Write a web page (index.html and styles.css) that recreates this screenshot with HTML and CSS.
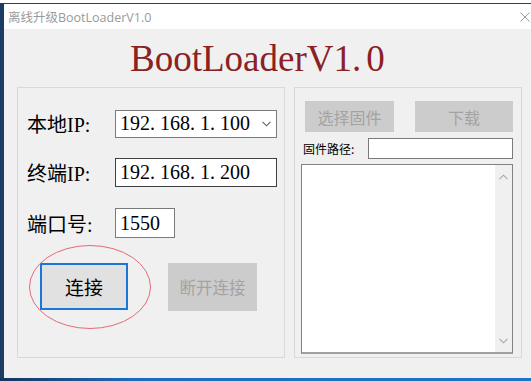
FILE: index.html
```html
<!DOCTYPE html>
<html lang="zh-CN">
<head>
    <meta charset="UTF-8">
    <title>离线升级BootLoaderV1.0</title>
    <link rel="stylesheet" href="styles.css">
</head>
<body>
    <div class="screen">
        <div class="window">
            <div class="titlebar">
                <span class="title">离线升级BootLoaderV1.0</span>
                <svg class="close" width="10" height="10" viewBox="0 0 10 10">
                    <path d="M0.5 0.5 L9.5 9.5 M9.5 0.5 L0.5 9.5" stroke="#9a9a9a" stroke-width="1" fill="none"/>
                </svg>
            </div>
            <div class="client">
                <h1 class="banner">BootLoaderV1.<span class="gap">0</span></h1>
                <div class="groups">
                    <div class="group group-net">
                        <div class="row row-local">
                            <span class="label">本地IP:</span>
                            <div class="field combo">
                                <span>192. 168. 1. 100</span>
                                <svg class="chevron" width="9" height="6" viewBox="0 0 9 6">
                                    <path d="M0.5 0.8 L4.5 4.8 L8.5 0.8" stroke="#606060" stroke-width="1.1" fill="none"/>
                                </svg>
                            </div>
                        </div>
                        <div class="row row-remote">
                            <span class="label">终端IP:</span>
                            <div class="field field-dark">192. 168. 1. 200</div>
                        </div>
                        <div class="row row-port">
                            <span class="label">端口号:</span>
                            <div class="field field-port">1550</div>
                        </div>
                        <div class="actions">
                            <button class="btn btn-connect">连接</button>
                            <button class="btn btn-off btn-disconnect" disabled>断开连接</button>
                        </div>
                        <svg class="mark" width="122" height="84" viewBox="0 0 122 84">
                            <ellipse cx="61" cy="42" rx="60.5" ry="41.5" stroke="#e26a78" stroke-width="1" fill="none"/>
                        </svg>
                    </div>
                    <div class="group group-fw">
                        <div class="fw-buttons">
                            <button class="btn btn-off btn-pick" disabled>选择固件</button>
                            <button class="btn btn-off btn-load" disabled>下载</button>
                        </div>
                        <div class="path-row">
                            <span class="path-label">固件路径:</span>
                            <div class="path-input"></div>
                        </div>
                        <div class="log">
                            <div class="log-text"></div>
                            <div class="scrollbar">
                                <svg width="9" height="6" viewBox="0 0 9 6">
                                    <path d="M0.5 5.2 L4.5 1.2 L8.5 5.2" stroke="#a6a6a6" stroke-width="1.1" fill="none"/>
                                </svg>
                                <svg width="9" height="6" viewBox="0 0 9 6">
                                    <path d="M0.5 0.8 L4.5 4.8 L8.5 0.8" stroke="#a6a6a6" stroke-width="1.1" fill="none"/>
                                </svg>
                            </div>
                        </div>
                    </div>
                </div>
            </div>
        </div>
        <div class="taskbar"></div>
    </div>
</body>
</html>
```

FILE: styles.css
```css
body {
    margin: 0;
    padding: 0;
    background: #ffffff;
    font-family: 'Liberation Serif', 'Noto Sans CJK SC', serif;
}
.screen {
    width: 531px;
    height: 381px;
    padding-top: 3px;
    box-sizing: border-box;
    display: flex;
    flex-direction: column;
    overflow: hidden;
}
.window {
    flex: 1;
    display: flex;
    flex-direction: column;
    border-top: 1px solid #3c3c3c;
    border-left: 4px solid #1c3d63;
}
.titlebar {
    height: 25px;
    background: #ffffff;
    display: flex;
    align-items: center;
    padding-left: 4px;
    padding-right: 1px;
}
.title {
    font-family: 'Open Sans', 'Noto Sans CJK SC', sans-serif;
    font-size: 12.5px;
    color: #9a9a9a;
}
.close {
    margin-left: auto;
}
.client {
    flex: 1;
    background: #f0f0f0;
    padding-left: 13px;
}
.banner {
    margin: 0;
    padding: 11px 0 0 113px;
    font-family: 'Liberation Serif', serif;
    font-weight: normal;
    font-size: 37px;
    line-height: 38px;
    color: #8a2124;
}
.gap {
    margin-left: 5px;
}
.groups {
    display: flex;
    gap: 9px;
    margin-top: 9px;
}
.group {
    position: relative;
    height: 271px;
    box-sizing: border-box;
    border: 1px solid #d9d9d9;
}
.group-net {
    width: 268px;
    padding: 21px 0 0 9px;
}
.group-fw {
    width: 228px;
    padding: 13px 8px 0 6px;
}
.row {
    display: flex;
    align-items: center;
}
.row-remote {
    margin-top: 20px;
}
.row-port {
    margin-top: 21px;
}
.label {
    width: 88px;
    font-size: 20px;
    color: #000000;
}
.field {
    box-sizing: border-box;
    width: 162px;
    height: 29px;
    background: #ffffff;
    border: 1px solid #7a7a7a;
    padding-left: 4px;
    font-size: 20px;
    line-height: 27px;
    color: #000000;
    display: flex;
    align-items: center;
}
.combo {
    height: 28px;
    padding-right: 5px;
}
.chevron {
    margin-left: auto;
}
.field-dark {
    border-color: #404040;
}
.field-port {
    width: 60px;
    height: 30px;
}
.actions {
    display: flex;
    align-items: flex-start;
    margin-top: 25px;
}
.btn {
    box-sizing: border-box;
    border: 1px solid #cccccc;
    background: #e1e1e1;
    font-family: 'Noto Sans CJK SC', sans-serif;
    color: #000000;
    padding: 0;
}
.btn-off {
    background: #cccccc;
    color: #a3a3a3;
}
.btn-connect {
    width: 88px;
    height: 47px;
    margin-left: 13px;
    border: 2px solid #1a78d4;
    font-size: 19px;
}
.btn-disconnect {
    width: 89px;
    height: 48px;
    margin-left: 40px;
    font-size: 16.5px;
}
.mark {
    position: absolute;
    left: 11px;
    top: 157px;
}
.fw-buttons {
    display: flex;
    padding-left: 4px;
}
.btn-pick,
.btn-load {
    height: 31px;
    font-size: 16px;
}
.btn-pick {
    width: 89px;
}
.btn-load {
    width: 98px;
    margin-left: auto;
}
.path-row {
    display: flex;
    align-items: center;
    margin-top: 6px;
}
.path-label {
    padding-left: 2px;
    font-family: 'Noto Sans CJK SC', sans-serif;
    font-size: 12px;
    color: #000000;
}
.path-input {
    box-sizing: border-box;
    width: 145px;
    height: 21px;
    margin-left: auto;
    background: #ffffff;
    border: 1px solid #7a7a7a;
}
.log {
    box-sizing: border-box;
    height: 190px;
    margin-top: 5px;
    display: flex;
    background: #ffffff;
    border: 1px solid #828282;
    border-bottom: 2px solid #a0a0a0;
}
.log-text {
    flex: 1;
}
.scrollbar {
    width: 17px;
    background: #f0f0f0;
    display: flex;
    flex-direction: column;
    justify-content: space-between;
    align-items: center;
    padding: 9px 0 8px;
}
.taskbar {
    height: 3px;
    background: linear-gradient(to right, #14355a, #1a6cc2 25%, #1b74cc);
}
```
